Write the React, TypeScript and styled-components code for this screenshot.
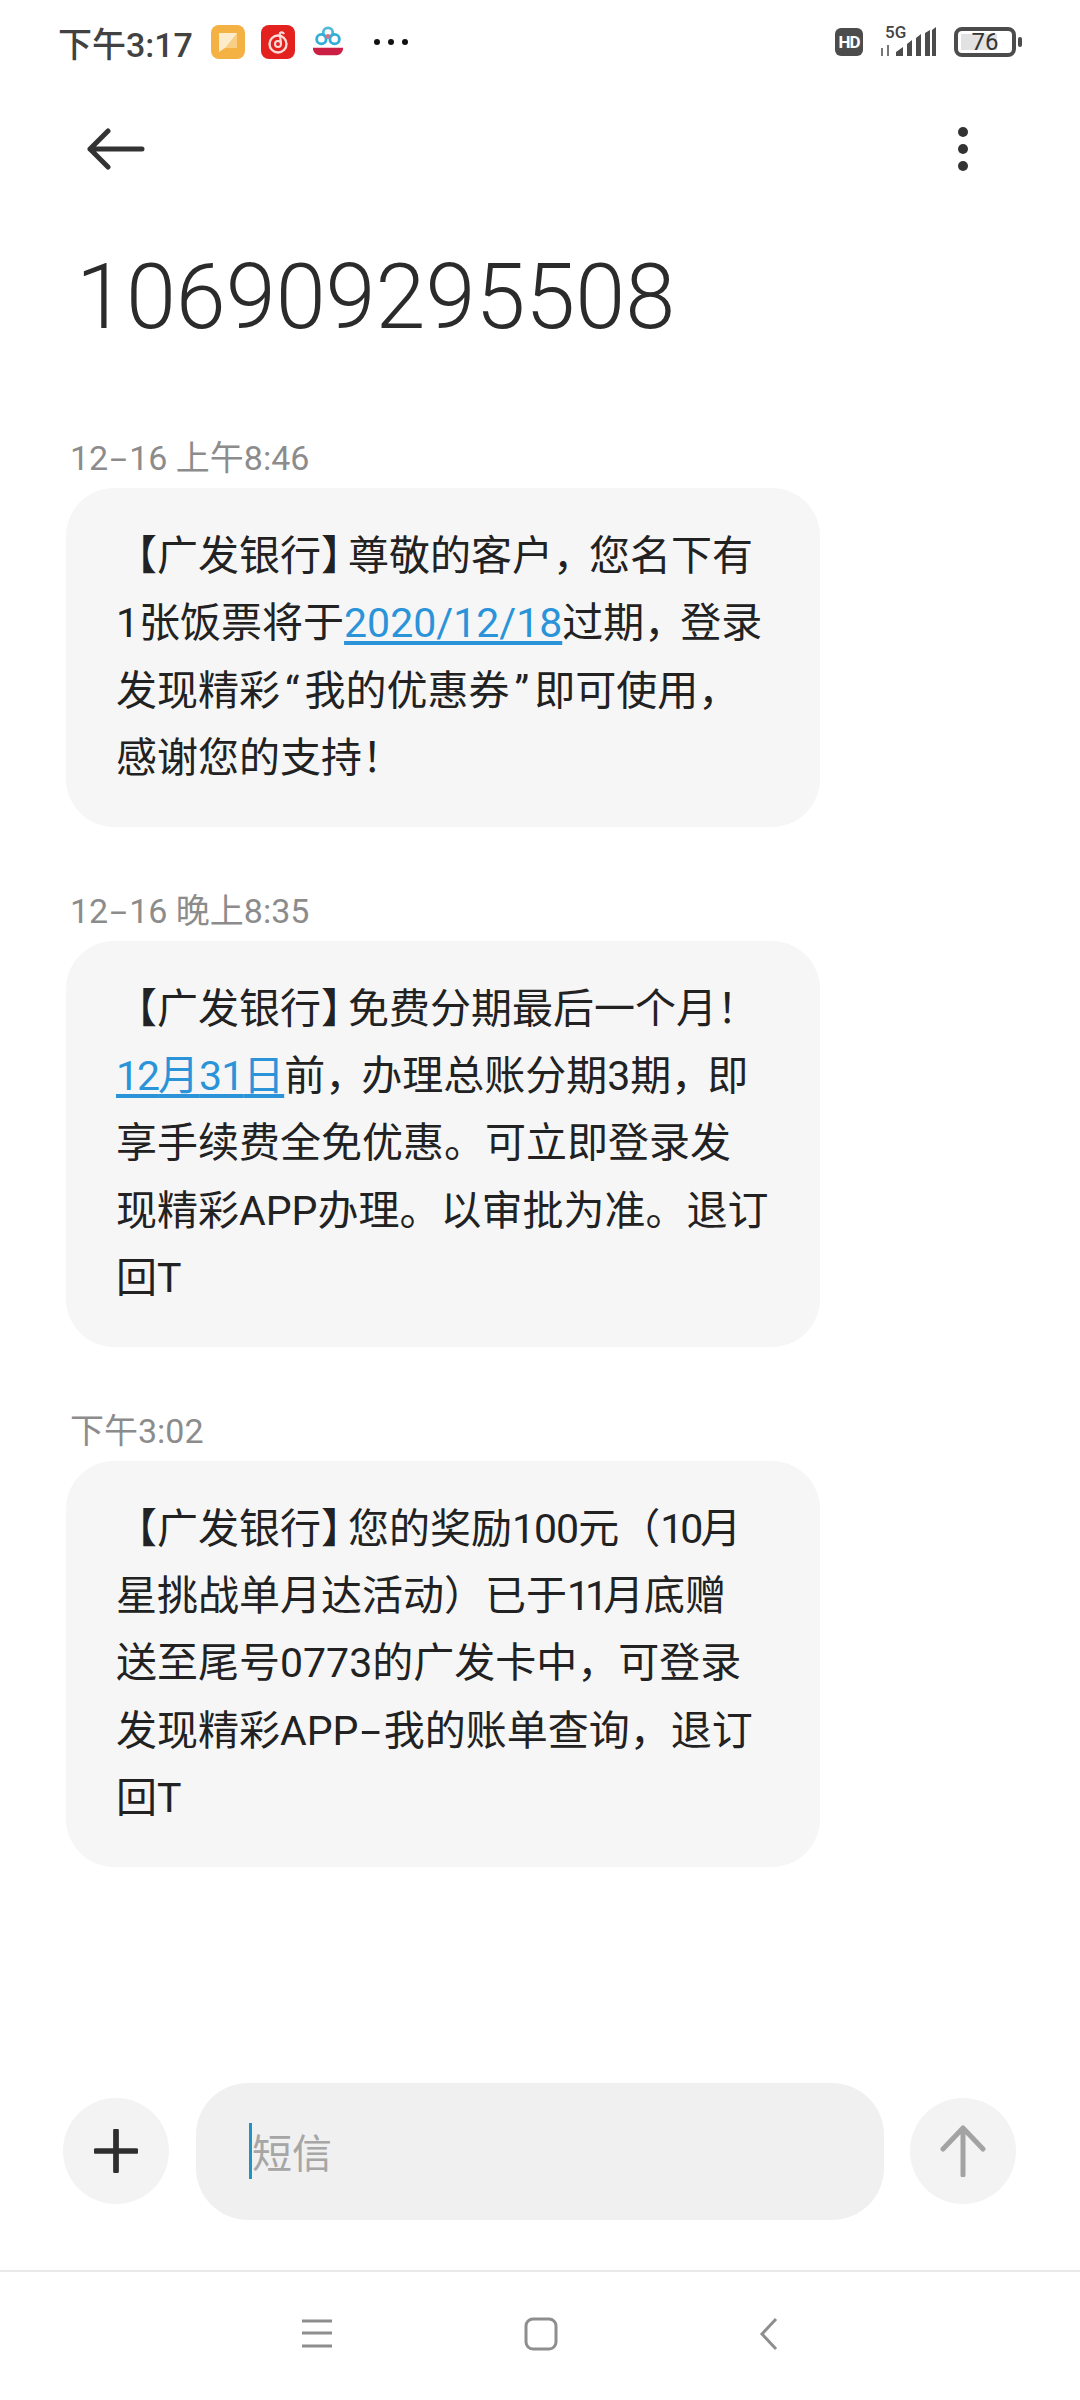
import styled, { createGlobalStyle } from "styled-components";

const cjk = `Roboto, "Noto Sans CJK SC", sans-serif`;

const GlobalStyle = createGlobalStyle`
  html, body {
    margin: 0;
    padding: 0;
    background: #fff;
  }
`;

const App = () => {
  return (
    <Screen>
      <GlobalStyle />
      <StatusBar>
        <StatusLeft>
          <Clock>下午3:17</Clock>
          <AppIcons>
            <svg width="34" height="34" viewBox="0 0 34 34">
              <rect width="34" height="34" rx="8" fill="#f4b244" />
              <path d="M8 8h18v15H14l-6 4z" fill="#fdeccb" />
              <path d="M26 8v15H14z" fill="#f8cf85" />
            </svg>
            <svg width="34" height="34" viewBox="0 0 34 34">
              <rect width="34" height="34" rx="8" fill="#e3211f" />
              <circle cx="17" cy="19" r="8.5" fill="none" stroke="#fbdcd8" strokeWidth="2.4" />
              <circle cx="17" cy="19" r="3" fill="none" stroke="#fbdcd8" strokeWidth="2" />
              <path d="M20 19c0-5-2-9-1-11 1-1 3-1 4 1" fill="none" stroke="#fbdcd8" strokeWidth="2.2" />
            </svg>
            <svg width="34" height="36" viewBox="0 0 36 36">
              <circle cx="18" cy="8" r="5" fill="none" stroke="#4dbad8" strokeWidth="3" />
              <circle cx="11" cy="15" r="5" fill="none" stroke="#35aed6" strokeWidth="3" />
              <circle cx="25" cy="15" r="5" fill="none" stroke="#35aed6" strokeWidth="3" />
              <circle cx="18" cy="12" r="2.5" fill="#d5708f" />
              <path d="M2 24h32c0 6-5 8-8 8H10c-3 0-8-2-8-8z" fill="#cc1f44" />
            </svg>
          </AppIcons>
          <MoreDots>
            <i />
            <i />
            <i />
          </MoreDots>
        </StatusLeft>
        <StatusRight>
          <HdBadge>HD</HdBadge>
          <Signal>
            <NetworkLabel>5G</NetworkLabel>
            <svg width="58" height="30" viewBox="0 0 58 30">
              <path d="M3 29v-8M9 29V18" stroke="#777" strokeWidth="2" />
              <path
                d="M17 29v-4l7-5v9zM28 29V17l5-4v16zM37 29V11l5-4v22zM46 29V6l5-3v26zM53 29V3l4-3v29z"
                fill="#4c4c4c"
              />
            </svg>
          </Signal>
          <Battery>
            <BatteryBody>
              <BatteryFill />
              <BatteryLevel>76</BatteryLevel>
            </BatteryBody>
            <BatteryCap />
          </Battery>
        </StatusRight>
      </StatusBar>

      <Toolbar>
        <svg width="58" height="42" viewBox="0 0 58 42">
          <path
            d="M3 21h52M21 3 3 21l18 18"
            fill="none"
            stroke="#333"
            strokeWidth="5"
            strokeLinecap="round"
            strokeLinejoin="round"
          />
        </svg>
        <MenuDots>
          <i />
          <i />
          <i />
        </MenuDots>
      </Toolbar>

      <Title>106909295508</Title>

      <Thread>
        <Message>
          <Time>
            12<Dash>-</Dash>16 上午8:46
          </Time>
          <Bubble>
            <Line>
              【广发银行<Tight>】</Tight>尊敬的客户<Comma>，</Comma>您名下有
            </Line>
            <Line>
              1张饭票将于<DateLink>2020/12/18</DateLink>过期<Comma>，</Comma>登录
            </Line>
            <Line>
              发现精彩<Quote>“</Quote>我的优惠券<Quote>”</Quote>即可使用，
            </Line>
            <Line>感谢您的支持！</Line>
          </Bubble>
        </Message>
        <Message>
          <Time>
            12<Dash>-</Dash>16 晚上8:35
          </Time>
          <Bubble>
            <Line>
              【广发银行<Tight>】</Tight>免费分期最后一个月！
            </Line>
            <Line>
              <DateLink>
                <Num $trim={2}>12</Num>月<Num $trim={1}>31</Num>日
              </DateLink>
              前<Comma>，</Comma>办理总账分期3期<Comma>，</Comma>即
            </Line>
            <Line>享手续费全免优惠。可立即登录发</Line>
            <Line>现精彩APP办理。以审批为准。退订</Line>
            <Line>回T</Line>
          </Bubble>
        </Message>
        <Message>
          <Time>下午3:02</Time>
          <Bubble>
            <Line>
              【广发银行<Tight>】</Tight>您的奖励<Num $trim={1}>100</Num>元（<Num $trim={3}>10</Num>月
            </Line>
            <Line>
              星挑战单月达活动）已于<Num $trim={5}>11</Num>月底赠
            </Line>
            <Line>送至尾号0773的广发卡中，可登录</Line>
            <Line>
              发现精彩APP<Dash>-</Dash>我的账单查询，退订
            </Line>
            <Line>回T</Line>
          </Bubble>
        </Message>
      </Thread>

      <Composer>
        <RoundButton>
          <svg width="44" height="44" viewBox="0 0 46 46">
            <path d="M23 2v42M2 23h42" stroke="#2e2e2e" strokeWidth="6" strokeLinecap="round" />
          </svg>
        </RoundButton>
        <InputBox>
          <Caret />
          <Placeholder>短信</Placeholder>
        </InputBox>
        <RoundButton>
          <svg width="46" height="52" viewBox="0 0 46 52">
            <path
              d="M23 50V3M3 24 23 3l20 21"
              fill="none"
              stroke="#a3a3a3"
              strokeWidth="5"
              strokeLinecap="round"
              strokeLinejoin="round"
            />
          </svg>
        </RoundButton>
      </Composer>

      <NavBar>
        <svg width="32" height="30" viewBox="0 0 32 30">
          <path d="M1 2h30M1 14h30M1 27h30" stroke="#8e8e8e" strokeWidth="3" />
        </svg>
        <svg width="34" height="34" viewBox="0 0 34 34">
          <rect x="2" y="2" width="30" height="30" rx="7" fill="none" stroke="#8e8e8e" strokeWidth="3" />
        </svg>
        <svg width="40" height="34" viewBox="0 0 40 34">
          <path d="M27 2 13 17l14 15" fill="none" stroke="#8e8e8e" strokeWidth="3" />
        </svg>
      </NavBar>
    </Screen>
  );
};

const Screen = styled.div`
  width: 1080px;
  height: 2400px;
  display: flex;
  flex-direction: column;
  background: #fff;
  font-family: ${cjk};
  color: #222;
  overflow: hidden;
`;

const StatusBar = styled.div`
  height: 84px;
  display: flex;
  align-items: center;
  justify-content: space-between;
  padding: 0 58px 0 58px;
`;

const StatusLeft = styled.div`
  display: flex;
  align-items: center;
`;

const Clock = styled.span`
  font-size: 34px;
  font-weight: 500;
  color: #424242;
  width: 153px;
`;

const AppIcons = styled.div`
  display: flex;
  align-items: center;
  gap: 16px;
`;

const MoreDots = styled.div`
  display: flex;
  gap: 8px;
  margin-left: 29px;
  i {
    width: 6px;
    height: 6px;
    border-radius: 50%;
    background: #111;
  }
`;

const StatusRight = styled.div`
  display: flex;
  align-items: center;
`;

const HdBadge = styled.span`
  width: 28px;
  height: 28px;
  border-radius: 6px;
  background: #4c4c4c;
  color: #fff;
  font-size: 17px;
  font-weight: 700;
  letter-spacing: -1px;
  display: flex;
  align-items: center;
  justify-content: center;
`;

const Signal = styled.div`
  position: relative;
  display: flex;
  margin-left: 16px;
`;

const NetworkLabel = styled.span`
  position: absolute;
  left: 6px;
  top: -5px;
  font-size: 17px;
  font-weight: 500;
  color: #444;
`;

const Battery = styled.div`
  display: flex;
  align-items: center;
  margin-left: 17px;
`;

const BatteryBody = styled.div`
  position: relative;
  width: 62px;
  height: 30px;
  box-sizing: border-box;
  border: 4px solid #4c4c4c;
  border-radius: 8px;
  display: flex;
  align-items: center;
  justify-content: center;
`;

const BatteryFill = styled.div`
  position: absolute;
  left: 3px;
  top: 3px;
  bottom: 3px;
  width: 36px;
  background: #e2e2e2;
`;

const BatteryLevel = styled.span`
  position: relative;
  font-size: 24px;
  color: #333;
  line-height: 1;
`;

const BatteryCap = styled.div`
  width: 4px;
  height: 10px;
  border-radius: 2px;
  background: #4c4c4c;
  margin-left: 2px;
`;

const Toolbar = styled.div`
  height: 130px;
  display: flex;
  align-items: center;
  justify-content: space-between;
  padding: 0 112px 0 87px;
`;

const MenuDots = styled.div`
  display: flex;
  flex-direction: column;
  gap: 7px;
  i {
    width: 10px;
    height: 10px;
    border-radius: 50%;
    background: #333;
  }
`;

const Title = styled.h1`
  margin: 0;
  height: 222px;
  box-sizing: border-box;
  padding: 29px 0 0 76px;
  font-size: 90px;
  line-height: 110px;
  font-weight: 300;
  color: #2b2b2b;
`;

const Thread = styled.div`
  flex: 1;
  display: flex;
  flex-direction: column;
  gap: 62px;
  padding-left: 66px;
`;

const Message = styled.div`
  display: flex;
  flex-direction: column;
  align-items: flex-start;
  gap: 8px;
`;

const Time = styled.div`
  font-size: 34px;
  line-height: 44px;
  color: #8c8c8c;
  margin-left: 4px;
`;

const Dash = styled.span`
  display: inline-block;
  padding: 0 0.17em;
  transform: scaleX(1.8);
`;

const Bubble = styled.div`
  width: 754px;
  box-sizing: border-box;
  padding: 35px 0 34px 50px;
  background: #f6f6f7;
  border-radius: 48px;
`;

const Line = styled.div`
  font-size: 41px;
  line-height: 67.4px;
  white-space: nowrap;
  color: #222;
`;

// punctuation and digits sit tighter in the phone's font than in Noto/Roboto
const Tight = styled.span`
  letter-spacing: -14px;
`;

const Comma = styled.span`
  letter-spacing: -5px;
`;

const Quote = styled.span`
  padding: 0 5px;
`;

const Num = styled.span<{ $trim: number }>`
  letter-spacing: ${(p) => -p.$trim}px;
`;

const DateLink = styled.span`
  color: #2b94d9;
  text-decoration: underline;
  text-underline-offset: 4px;
`;

const Composer = styled.div`
  height: 190px;
  box-sizing: border-box;
  display: flex;
  align-items: center;
  padding: 0 60px 50px 63px;
  border-bottom: 2px solid #e9e9e9;
`;

const RoundButton = styled.div`
  width: 106px;
  height: 106px;
  flex-shrink: 0;
  border-radius: 50%;
  background: #f3f3f3;
  display: flex;
  align-items: center;
  justify-content: center;
`;

const InputBox = styled.div`
  width: 688px;
  height: 137px;
  margin: 0 26px 0 27px;
  box-sizing: border-box;
  padding-left: 53px;
  border-radius: 52px;
  background: #f0f0f0;
  display: flex;
  align-items: center;
`;

const Caret = styled.div`
  width: 3px;
  height: 56px;
  background: #1f93c4;
`;

const Placeholder = styled.span`
  font-size: 40px;
  color: #a6a6a6;
`;

const NavBar = styled.div`
  height: 128px;
  display: flex;
  align-items: center;
  justify-content: center;
  gap: 191px;
  padding: 0 0 4px 10px;
  box-sizing: border-box;
`;

export default App;
